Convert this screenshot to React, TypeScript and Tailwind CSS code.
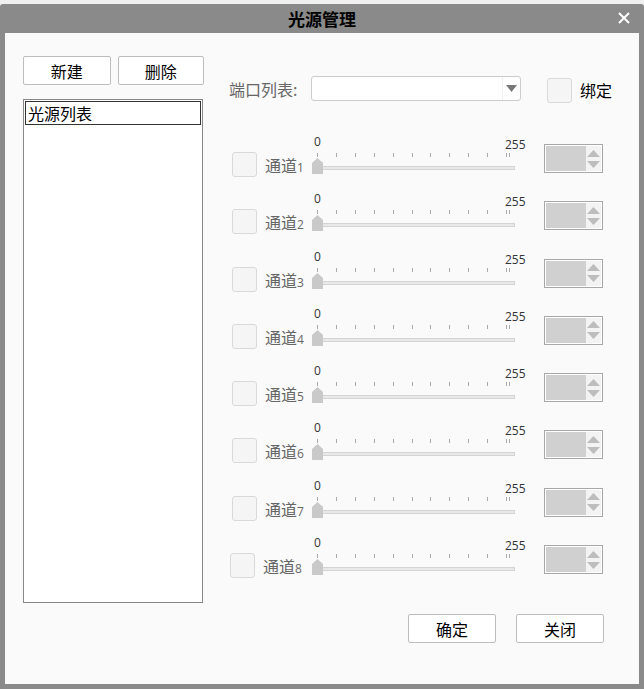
const channels = [1, 2, 3, 4, 5, 6, 7, 8];
const ticks = [0, 1, 2, 3, 4, 5, 6, 7, 8, 9, 10];

function Checkbox() {
  return <span className="block h-[25px] w-[25px] rounded-[3px] border border-[#d9d9d9] bg-[#f5f5f5]" />;
}

function Slider() {
  return (
    <div className="relative h-[45px] w-[213px] font-['Open_Sans',sans-serif] text-[12px] leading-[12px] text-[#333]">
      <span className="absolute left-[2px] top-[2px]">0</span>
      <span className="absolute left-[193px] top-[5px]">255</span>
      {ticks.map((t) => (
        <span
          key={t}
          className="absolute top-[19px] h-[4px] w-px bg-[#aaa]"
          style={{ left: 5 + t * 18.9 }}
        />
      ))}
      <span className="absolute left-[197px] top-[19px] h-[4px] w-px bg-[#aaa]" />
      <span className="absolute left-[8px] top-[32px] h-[4px] w-[195px] border border-[#d4d4d4] bg-[#e9e9e9]" />
      <svg className="absolute left-0 top-[24px]" width="11" height="16" viewBox="0 0 11 16">
        <polygon points="5.5,0 11,5 11,16 0,16 0,5" fill="#c9c9c9" />
      </svg>
    </div>
  );
}

function SpinBox() {
  return (
    <div className="mt-[10px] flex h-[29px] w-[59px] border border-[#a8a8a8] bg-white p-px">
      <div className="flex-1 bg-[#d0d0d0]" />
      <div className="flex w-[15px] flex-col items-center justify-center gap-[4px] bg-[#f3f3f3]">
        <svg width="13" height="7" viewBox="0 0 13 7">
          <polygon points="6.5,0 13,7 0,7" fill="#bdbdbd" />
        </svg>
        <svg width="13" height="7" viewBox="0 0 13 7">
          <polygon points="0,0 13,0 6.5,7" fill="#bdbdbd" />
        </svg>
      </div>
    </div>
  );
}

function ChannelRow({ n }: { n: number }) {
  return (
    <div className="flex h-[57.3px] items-start">
      <div className={`flex w-[83px] items-start ${n === 8 ? 'pl-[1px]' : 'pl-[3px]'}`}>
        <div className="mt-[18px]">
          <Checkbox />
        </div>
        <span className="ml-[8px] mt-[20px] text-[16px] leading-[22px] text-[#666]">
          通道<span className="font-['Open_Sans',sans-serif] text-[12px]">{n}</span>
        </span>
      </div>
      <Slider />
      <div className="ml-[19px]">
        <SpinBox />
      </div>
    </div>
  );
}

function Button({ label, w }: { label: string; w: string }) {
  return (
    <button
      className={`${w} h-[29px] rounded-[2px] border border-[#bdbdbd] bg-white text-[16px] leading-[20px] text-black`}
    >
      {label}
    </button>
  );
}

export default function App() {
  return (
    <div className="h-[689px] w-[644px] bg-[#f0f0f0] pt-[4px] font-['Noto_Sans_CJK_SC',sans-serif]">
      <div className="flex h-[685px] flex-col rounded-t-[3px] bg-[#8a8a8a] px-[5px] pb-[5px]">
        <div className="relative flex h-[29px] items-center justify-center">
          <span className="text-[17px] font-bold leading-[20px] text-black">光源管理</span>
          <svg className="absolute right-[9px] top-[8px]" width="12" height="12" viewBox="0 0 12 12">
            <path d="M1 1L11 11M11 1L1 11" stroke="white" strokeWidth="2" />
          </svg>
        </div>
        <div className="flex flex-1 bg-[#fafafa] pl-[18px]">
          <div className="flex w-[181px] flex-col pt-[23px]">
            <div className="flex gap-[7px]">
              <Button label="新建" w="w-[88px]" />
              <Button label="删除" w="w-[87px]" />
            </div>
            <div className="mt-[14px] h-[504px] w-[180px] border border-[#888] bg-white p-px">
              <div className="h-[24px] border border-[#333] pl-[2px] text-[16px] leading-[22px] text-black">光源列表</div>
            </div>
          </div>
          <div className="ml-[25px] flex flex-1 flex-col pt-[43px]">
            <div className="flex h-[26px] items-start">
              <span className="w-[82px] pt-[2px] text-[16px] leading-[22px] text-[#666]">端口列表:</span>
              <div className="flex h-[25px] w-[210px] items-center justify-end rounded-[3px] border border-[#ccc] bg-white">
                <span className="h-[23px] w-px bg-[#f0f0f0]" />
                <svg className="mx-[3px]" width="11" height="8" viewBox="0 0 11 8">
                  <polygon points="0,0 11,0 5.5,7" fill="#777" />
                </svg>
              </div>
              <div className="ml-[26px] mt-[2px]">
                <Checkbox />
              </div>
              <span className="ml-[8px] pt-[3px] text-[16px] leading-[22px] text-black">绑定</span>
            </div>
            <div className="mt-[32px] flex flex-col">
              {channels.map((n) => (
                <ChannelRow key={n} n={n} />
              ))}
            </div>
            <div className="mr-[35px] mt-[22px] flex justify-end gap-[20px]">
              <Button label="确定" w="w-[88px]" />
              <Button label="关闭" w="w-[88px]" />
            </div>
          </div>
        </div>
      </div>
    </div>
  );
}
